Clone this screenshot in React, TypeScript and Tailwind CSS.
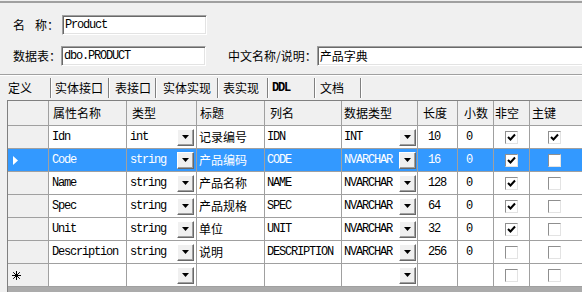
import React from "react";

const MONO = "font-['Liberation_Mono',monospace] text-[12px] tracking-[-1.2px]";
const CJK = "font-['Noto_Sans_CJK_SC',sans-serif] text-[12px]";

const colW = [
  "w-[41px]",
  "w-[78px]",
  "w-[70px]",
  "w-[68px]",
  "w-[77px]",
  "w-[76px]",
  "w-[40px]",
  "w-[36px]",
  "w-[36px]",
  "w-[60px]",
];

function DropBtn() {
  return (
    <div className="w-[17px] h-[17px] shrink-0 bg-[#f0f0f0] border border-t-white border-l-white border-b-[#696969] border-r-[#696969] shadow-[inset_-1px_-1px_0_#a0a0a0] flex items-center justify-center">
      <svg width="7" height="4" viewBox="0 0 7 4">
        <path d="M0 0h7L3.5 4z" fill="#000" />
      </svg>
    </div>
  );
}

function Check({ checked }: { checked: boolean }) {
  return (
    <div className="w-[13px] h-[13px] bg-white border border-t-[#8f8f8f] border-l-[#8f8f8f] border-b-[#e3e3e3] border-r-[#e3e3e3] flex items-center justify-center">
      {checked && (
        <svg width="9" height="9" viewBox="0 0 9 9">
          <path d="M1 4 L3.5 6.5 L8 1.5" stroke="#000" strokeWidth="2" fill="none" />
        </svg>
      )}
    </div>
  );
}

function Input({ w, children, cjk }: { w: string; children: React.ReactNode; cjk?: boolean }) {
  return (
    <div
      className={`${w} h-[20px] shrink-0 bg-white border-t border-l border-[#a0a0a0] border-b border-r border-b-white border-r-white shadow-[inset_1px_1px_0_#696969,inset_-1px_-1px_0_#e3e3e3] flex items-center pl-[2px] text-black ${
        cjk ? CJK : MONO
      }`}
    >
      {children}
    </div>
  );
}

type Row = {
  name: string;
  type: string;
  title: string;
  col: string;
  dtype: string;
  len: string;
  dec: string;
  notnull: boolean;
  pk: boolean;
};

const rows: Row[] = [
  { name: "Idn", type: "int", title: "记录编号", col: "IDN", dtype: "INT", len: "10", dec: "0", notnull: true, pk: true },
  { name: "Code", type: "string", title: "产品编码", col: "CODE", dtype: "NVARCHAR", len: "16", dec: "0", notnull: true, pk: false },
  { name: "Name", type: "string", title: "产品名称", col: "NAME", dtype: "NVARCHAR", len: "128", dec: "0", notnull: true, pk: false },
  { name: "Spec", type: "string", title: "产品规格", col: "SPEC", dtype: "NVARCHAR", len: "64", dec: "0", notnull: true, pk: false },
  { name: "Unit", type: "string", title: "单位", col: "UNIT", dtype: "NVARCHAR", len: "32", dec: "0", notnull: true, pk: false },
  { name: "Description", type: "string", title: "说明", col: "DESCRIPTION", dtype: "NVARCHAR", len: "256", dec: "0", notnull: false, pk: false },
];

const cellBase = "h-full shrink-0 border-r border-[#a0a0a0] flex items-center";

function Tab({ w, pl, children, mono }: { w: string; pl: string; children: React.ReactNode; mono?: boolean }) {
  return (
    <div className={`${w} h-full shrink-0 flex items-center relative`}>
      <span className={`${pl} ${mono ? "font-['Liberation_Mono',monospace] text-[12px] tracking-[-1.2px] font-bold" : CJK} text-black`}>
        {children}
      </span>
      <div className="absolute right-0 top-[2px] h-[20px] w-[1px] bg-[#808080] shadow-[1px_0_0_#ffffff]" />
    </div>
  );
}

export default function App() {
  return (
    <div className="w-[582px] h-[292px] bg-[#f0f0f0] overflow-hidden flex flex-col">
      <div className="mt-[1px] h-[2px] bg-[#a0a0a0] shrink-0" />
      {/* row 1 */}
      <div className="mt-[12px] flex items-center shrink-0">
        <div className={`w-[62px] pl-[13px] flex ${CJK} text-black`}>
          <span>名</span>
          <span className="ml-[10px]">称：</span>
        </div>
        <Input w="w-[145px]">Product</Input>
      </div>
      {/* row 2 */}
      <div className="mt-[11px] flex items-center shrink-0">
        <div className={`w-[62px] pl-[13px] ${CJK} text-black whitespace-nowrap`}>数据表：</div>
        <Input w="w-[145px]">dbo.PRODUCT</Input>
        <div className={`ml-[22px] w-[91px] ${CJK} text-black whitespace-nowrap`}>中文名称/说明：</div>
        <Input w="w-[270px]" cjk>
          产品字典
        </Input>
      </div>
      <div className="mt-[8px] h-[1px] bg-[#a0a0a0] shrink-0" />
      <div className="h-[1px] bg-white shrink-0" />
      {/* tabs */}
      <div className="h-[24px] flex shrink-0">
        <Tab w="w-[51px]" pl="pl-[8px]">定义</Tab>
        <Tab w="w-[58px]" pl="pl-[4px]">实体接口</Tab>
        <Tab w="w-[47px]" pl="pl-[6px]">表接口</Tab>
        <Tab w="w-[62px]" pl="pl-[7px]">实体实现</Tab>
        <Tab w="w-[50px]" pl="pl-[5px]">表实现</Tab>
        <Tab w="w-[47px]" pl="pl-[4px]" mono>
          DDL
        </Tab>
        <Tab w="w-[46px]" pl="pl-[5px]">文档</Tab>
      </div>
      {/* grid */}
      <div className="ml-[7px] flex-1 bg-[#ababab] border-t border-l border-[#808080] overflow-hidden flex flex-col">
        {/* header */}
        <div className="h-[25px] flex shrink-0 bg-[#f0f0f0] border-b border-[#a0a0a0]">
          <div className={`${colW[0]} ${cellBase}`} />
          <div className={`${colW[1]} ${cellBase} pl-[4px] ${CJK}`}>属性名称</div>
          <div className={`${colW[2]} ${cellBase} pl-[5px] ${CJK}`}>类型</div>
          <div className={`${colW[3]} ${cellBase} pl-[3px] ${CJK}`}>标题</div>
          <div className={`${colW[4]} ${cellBase} pl-[5px] ${CJK}`}>列名</div>
          <div className={`${colW[5]} ${cellBase} pl-[2px] ${CJK}`}>数据类型</div>
          <div className={`${colW[6]} ${cellBase} pl-[5px] ${CJK}`}>长度</div>
          <div className={`${colW[7]} ${cellBase} pl-[6px] ${CJK}`}>小数</div>
          <div className={`${colW[8]} ${cellBase} pl-[1px] ${CJK}`}>非空</div>
          <div className={`${colW[9]} ${cellBase} pl-[2px] ${CJK}`}>主键</div>
        </div>
        {rows.map((r, i) => {
          const sel = i === 1;
          const bg = sel ? "bg-[#3399ff] text-white" : "bg-white text-black";
          return (
            <div key={r.name} className="h-[23px] flex shrink-0 border-b border-[#a0a0a0]">
              <div className={`${colW[0]} ${cellBase} pl-[5px] ${sel ? "bg-[#3399ff]" : "bg-[#f0f0f0]"}`}>
                {sel && (
                  <svg width="5" height="9" viewBox="0 0 5 9">
                    <path d="M0 0L5 4.5L0 9z" fill="#fff" />
                  </svg>
                )}
              </div>
              <div className={`${colW[1]} ${cellBase} ${bg} pl-[3px] ${MONO}`}>{r.name}</div>
              <div className={`${colW[2]} ${cellBase} ${bg} pl-[3px] pr-[2px] justify-between ${MONO}`}>
                <span>{r.type}</span>
                <DropBtn />
              </div>
              <div className={`${colW[3]} ${cellBase} ${bg} pl-[2px] ${CJK}`}>{r.title}</div>
              <div className={`${colW[4]} ${cellBase} ${bg} pl-[2px] ${MONO}`}>{r.col}</div>
              <div className={`${colW[5]} ${cellBase} ${bg} pl-[2px] pr-[1px] justify-between ${MONO}`}>
                <span>{r.dtype}</span>
                <DropBtn />
              </div>
              <div className={`${colW[6]} ${cellBase} ${bg} pl-[10px] ${MONO}`}>{r.len}</div>
              <div className={`${colW[7]} ${cellBase} ${bg} pl-[8px] ${MONO}`}>{r.dec}</div>
              <div className={`${colW[8]} ${cellBase} ${bg} justify-center`}>
                <Check checked={r.notnull} />
              </div>
              <div className={`${colW[9]} ${cellBase} ${bg} pl-[18px]`}>
                <Check checked={r.pk} />
              </div>
            </div>
          );
        })}
        {/* new row */}
        <div className="h-[23px] flex shrink-0 border-b border-[#a0a0a0]">
          <div className={`${colW[0]} ${cellBase} bg-[#f0f0f0] pl-[4px]`}>
            <svg width="9" height="9" viewBox="0 0 9 9">
              <path d="M4.5 0V9M0 4.5H9M1.2 1.2L7.8 7.8M7.8 1.2L1.2 7.8" stroke="#000" strokeWidth="1" />
            </svg>
          </div>
          <div className={`${colW[1]} ${cellBase} bg-white`} />
          <div className={`${colW[2]} ${cellBase} bg-white justify-end pr-[2px]`}>
            <DropBtn />
          </div>
          <div className={`${colW[3]} ${cellBase} bg-white`} />
          <div className={`${colW[4]} ${cellBase} bg-white`} />
          <div className={`${colW[5]} ${cellBase} bg-white justify-end pr-[1px]`}>
            <DropBtn />
          </div>
          <div className={`${colW[6]} ${cellBase} bg-white`} />
          <div className={`${colW[7]} ${cellBase} bg-white`} />
          <div className={`${colW[8]} ${cellBase} bg-white justify-center`}>
            <Check checked={false} />
          </div>
          <div className={`${colW[9]} ${cellBase} bg-white pl-[18px]`}>
            <Check checked={false} />
          </div>
        </div>
      </div>
    </div>
  );
}
